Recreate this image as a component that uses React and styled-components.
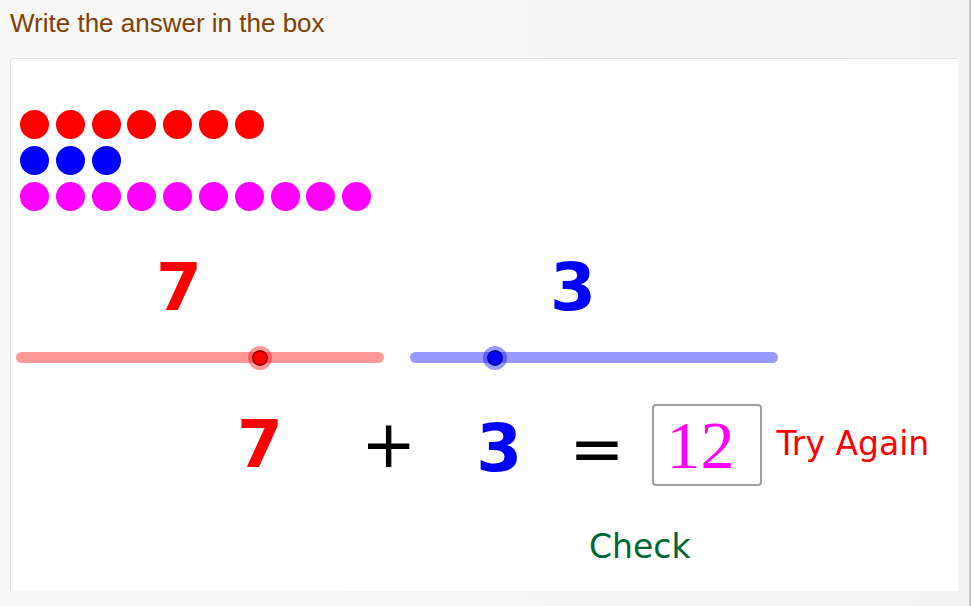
import React, { useState } from "react";
import styled, { createGlobalStyle } from "styled-components";

const RED = "#ff0000";
const BLUE = "#0000ff";
const MAGENTA = "#ff00ff";

const GlobalStyle = createGlobalStyle`
  *, *::before, *::after { box-sizing: border-box; }
  body {
    margin: 0;
    background: #f7f7f7;
    font-family: "DejaVu Sans", sans-serif;
  }
`;

const Page = styled.main`
  display: flex;
  flex-direction: column;
  min-height: 100vh;
  padding: 0 10px 15px 10px;
  background: linear-gradient(to right, #f8f8f8, #f4f4f4);
  border-right: 2px solid #cccccc;
`;

const Title = styled.h1`
  margin: 0;
  padding: 8px 0 20px;
  color: #804000;
  font: 400 26px/30px "Liberation Sans", Arial, sans-serif;
`;

const Board = styled.section`
  display: flex;
  flex: 1;
  flex-direction: column;
  padding: 51px 0 16px 5px;
  margin-right: 1px;
  background: #ffffff;
  border: 1px solid #e2e2e2;
  border-width: 1px 0 0 1px;
  border-radius: 3px 0 0 0;
`;

const Counters = styled.div`
  display: grid;
  gap: 7px;
  width: 358px;
  margin-left: 4px;
`;

const CounterRow = styled.div`
  display: grid;
  grid-template-columns: repeat(10, 1fr);
`;

const Dot = styled.span`
  width: 29px;
  height: 29px;
  border-radius: 50%;
  background: ${(p) => p.$color};
`;

const Sliders = styled.div`
  display: grid;
  grid-template-columns: repeat(2, minmax(0, 368px));
  column-gap: 26px;
  margin-top: 38px;
`;

const SliderField = styled.div`
  display: flex;
  flex-direction: column;
`;

const SliderLabel = styled.label`
  padding-left: 140px;
  color: ${(p) => p.$color};
  font-size: 66px;
  font-weight: 700;
  line-height: 78px;
`;

const Rail = styled.div`
  display: flex;
  align-items: center;
  height: 11px;
  margin-top: 25px;
  border-radius: 6px;
  background: ${(p) => p.$color}66;
`;

const Range = styled.input`
  flex: 1;
  min-width: 0;
  height: 24px;
  margin: 0 -7px;
  appearance: none;
  background: transparent;

  &::-webkit-slider-runnable-track {
    height: 24px;
  }

  &::-webkit-slider-thumb {
    width: 24px;
    height: 24px;
    appearance: none;
    border: 4px solid ${(p) => p.$color}66;
    border-radius: 50%;
    background: radial-gradient(
      circle,
      ${(p) => p.$color} 6px,
      ${(p) => p.$edge} 7px,
      ${(p) => p.$edge} 8px,
      ${(p) => p.$color}66 8px
    );
    background-clip: padding-box;
  }
`;

const Equation = styled.form`
  display: flex;
  align-items: flex-start;
  margin-top: 41px;
`;

const LeftSide = styled.div`
  display: flex;
  gap: 78px;
  margin-left: 221px;
`;

const RightSide = styled.div`
  display: flex;
  gap: 47px;
  margin: 4px 27px 0 60px;
`;

const Term = styled.span`
  color: ${(p) => p.$color};
  font-size: 66px;
  font-weight: 700;
  line-height: 82px;
`;

const Operator = styled.span`
  color: #000000;
  font-size: 66px;
  line-height: 82px;
`;

const Answer = styled.input`
  width: 110px;
  height: 82px;
  padding: 0 0 0 13px;
  color: ${MAGENTA};
  font: 68px/78px "Liberation Serif", serif;
  background: #ffffff;
  border: 2px solid #a0a0a0;
  border-radius: 4px;
  outline: none;
`;

const Feedback = styled.output`
  margin-left: 15px;
  color: ${RED};
  font-size: 33px;
  line-height: 80px;
  white-space: nowrap;
`;

const CheckButton = styled.button`
  align-self: flex-start;
  margin: 37px 0 0 573px;
  padding: 0;
  color: #006633;
  font: 33px/40px "DejaVu Sans", sans-serif;
  background: none;
  border: 0;
  cursor: pointer;
`;

function Dots({ count, color }) {
  return (
    <CounterRow>
      {Array.from({ length: count }, (_, i) => (
        <Dot key={i} $color={color} />
      ))}
    </CounterRow>
  );
}

function NumberSlider({ id, value, onChange, color, edge }) {
  return (
    <SliderField>
      <SliderLabel htmlFor={id} $color={color}>{value}</SliderLabel>
      <Rail $color={color}>
        <Range
          id={id}
          type="range"
          min="1"
          max="10"
          value={value}
          onChange={(e) => onChange(Number(e.target.value))}
          $color={color}
          $edge={edge}
        />
      </Rail>
    </SliderField>
  );
}

export default function App() {
  const [first, setFirst] = useState(7);
  const [second, setSecond] = useState(3);
  const [answer, setAnswer] = useState("12");
  const [message, setMessage] = useState("Try Again");

  const check = (e) => {
    e.preventDefault();
    setMessage(Number(answer) === first + second ? "Correct" : "Try Again");
  };

  return (
    <>
      <GlobalStyle />
      <Page>
        <Title id="task">Write the answer in the box</Title>
        <Board>
          <Counters>
            <Dots count={first} color={RED} />
            <Dots count={second} color={BLUE} />
            <Dots count={Math.min(first + second, 10)} color={MAGENTA} />
          </Counters>
          <Sliders>
            <NumberSlider id="first" value={first} onChange={setFirst} color={RED} edge="#8c0000" />
            <NumberSlider id="second" value={second} onChange={setSecond} color={BLUE} edge="#00008c" />
          </Sliders>
          <Equation id="sum" onSubmit={check}>
            <LeftSide>
              <Term $color={RED}>{first}</Term>
              <Operator>+</Operator>
            </LeftSide>
            <RightSide>
              <Term $color={BLUE}>{second}</Term>
              <Operator>=</Operator>
            </RightSide>
            <Answer
              aria-labelledby="task"
              inputMode="numeric"
              value={answer}
              onChange={(e) => setAnswer(e.target.value)}
            />
            <Feedback>{message}</Feedback>
          </Equation>
          <CheckButton type="submit" form="sum">Check</CheckButton>
        </Board>
      </Page>
    </>
  );
}
